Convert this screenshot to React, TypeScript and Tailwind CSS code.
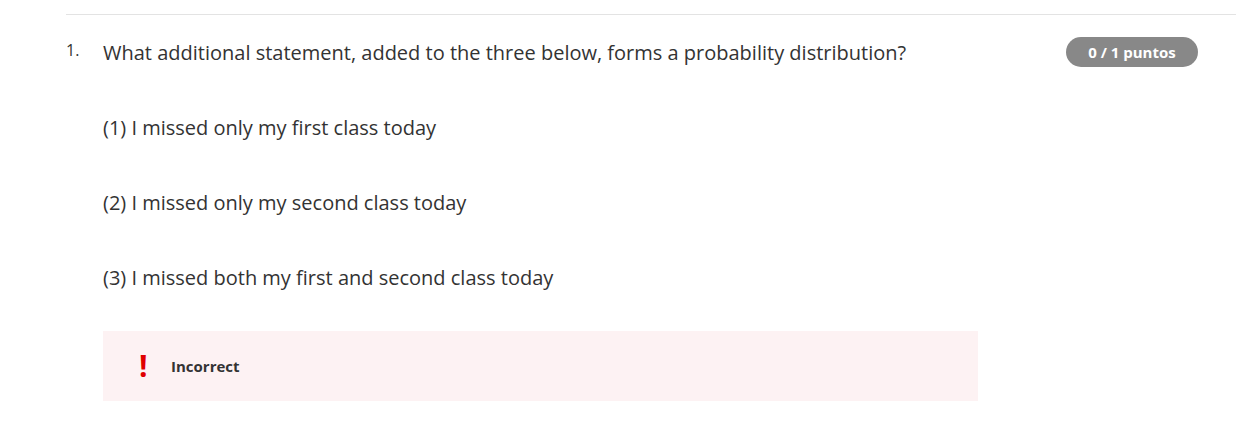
export default function App() {
  return (
    <div className="w-[1257px] h-[435px] bg-white" style={{ fontFamily: '"Open Sans", sans-serif' }}>
      <div className="pt-[14px] pl-[66px] w-[1236px]">
        <div className="border-t border-[#e3e3e3]">
          <div className="flex pt-[21px]">
            <div className="w-[37px] text-[16px] leading-[24px] text-[#333] pt-[2px]">1.</div>
            <div className="flex-1">
              <div className="flex items-start justify-between pr-[38px]">
                <div className="text-[20px] leading-[30px] text-[#333] pt-[2px]">
                  What additional statement, added to the three below, forms a probability distribution?
                </div>
                <div className="w-[132px] h-[30px] mt-[1px] rounded-full bg-[#888888] text-white text-[15px] font-bold flex items-center justify-center">
                  0 / 1 puntos
                </div>
              </div>
              <div className="mt-[45px] flex flex-col gap-[45px] text-[20px] leading-[30px] text-[#333]">
                <div>(1) I missed only my first class today</div>
                <div>(2) I missed only my second class today</div>
                <div>(3) I missed both my first and second class today</div>
              </div>
              <div className="mt-[38px] w-[875px] h-[70px] bg-[#fdf2f3] flex items-center pl-[36px]">
                <span className="text-[#e00000] text-[30px] font-bold leading-none w-[32px]">!</span>
                <span className="text-[15px] font-bold text-[#333]">Incorrect</span>
              </div>
            </div>
          </div>
        </div>
      </div>
    </div>
  );
}
